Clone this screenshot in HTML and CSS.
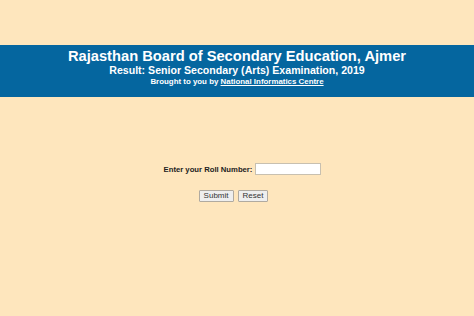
FILE: index.html
```html
<!DOCTYPE html>
<html lang="en">
<head>
    <meta charset="UTF-8">
    <meta name="viewport" content="width=device-width, initial-scale=1.0">
    <title>RBSE Result 2019</title>
    <link rel="stylesheet" href="styles.css">
</head>
<body>
    <div class="header">
        <h1>Rajasthan Board of Secondary Education, Ajmer</h1>
        <h2>Result: Senior Secondary (Arts) Examination, 2019</h2>
        <p>Brought to you by <a href="#">National Informatics Centre</a></p>
    </div>

    <form class="roll-form" id="rollForm">
        <div class="row">
            <label for="roll">Enter your Roll Number:</label>
            <input type="text" id="roll" name="roll">
        </div>
        <div class="buttons">
            <button type="submit">Submit</button>
            <button type="reset">Reset</button>
        </div>
    </form>
</body>
</html>
```
FILE: styles.css
```css
body {
    font-family: "Liberation Sans", Arial, sans-serif;
    margin: 0;
    padding: 0;
    background-color: #fee6bd;
    color: #222;
}
.header {
    margin-top: 45px;
    height: 52px;
    box-sizing: border-box;
    padding-top: 3px;
    background-color: #05669f;
    color: #fff;
    text-align: center;
}
.header h1 {
    margin: 0;
    font-size: 14.7px;
    line-height: 16px;
}
.header h2 {
    margin: 0;
    font-size: 10.6px;
    line-height: 12px;
}
.header p {
    margin: 0;
    font-size: 7.9px;
    line-height: 11px;
    font-weight: bold;
}
.header a {
    color: #fff;
}
.roll-form {
    margin-top: 66px;
    text-align: center;
}
.row {
    display: flex;
    justify-content: center;
    align-items: center;
    gap: 3px;
    padding-left: 11px;
}
label {
    font-size: 7.7px;
    font-weight: bold;
}
input {
    width: 62px;
    height: 8px;
    padding: 1px;
    border: 1px solid #c8c0b0;
    background: #fff;
}
.buttons {
    margin-top: 15px;
    display: flex;
    justify-content: center;
    gap: 4px;
    padding-right: 7px;
}
button {
    font-family: "Liberation Sans", Arial, sans-serif;
    font-size: 8px;
    padding: 1px 4px;
    height: 12px;
    line-height: 8px;
    color: #333;
    background: #eeeeee;
    border: 1px solid #b0aaa0;
    border-radius: 1px;
}
```
